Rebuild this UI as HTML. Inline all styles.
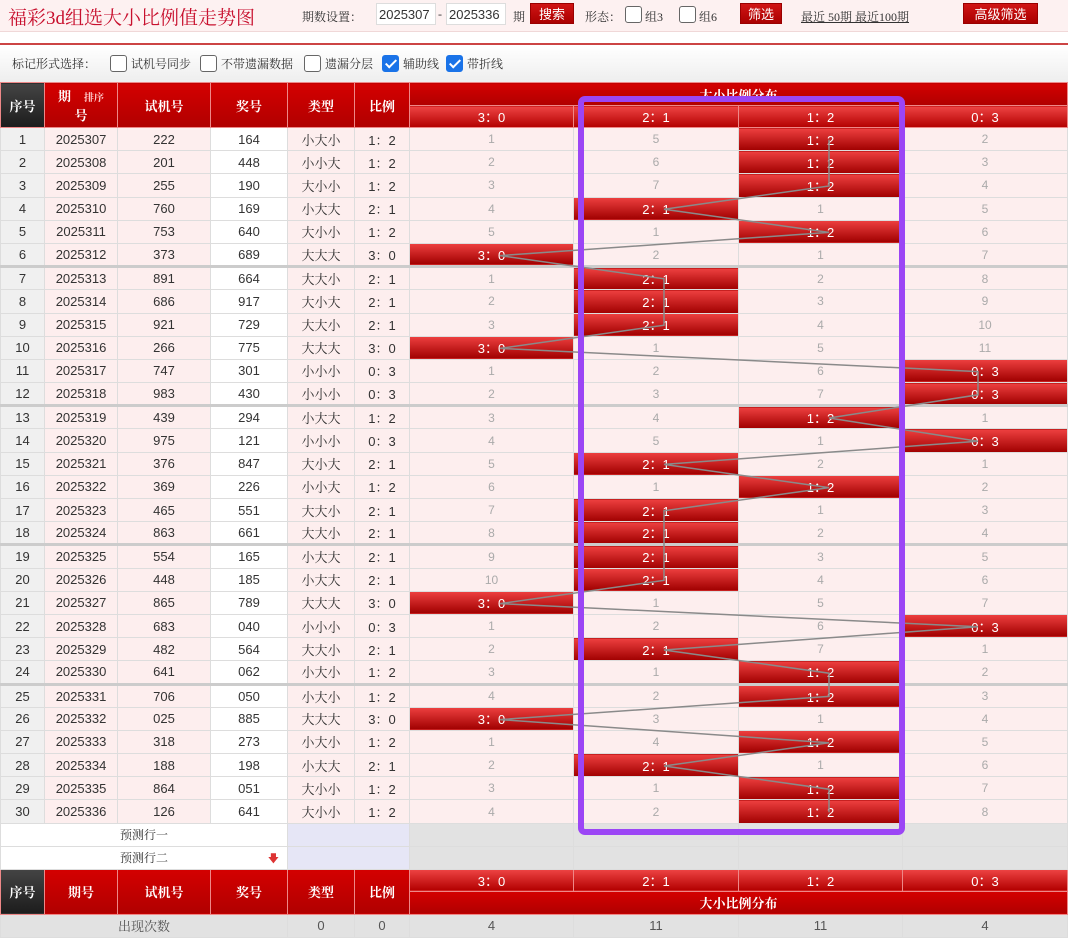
<!DOCTYPE html>
<html><head><meta charset="utf-8"><style>
*{margin:0;padding:0;box-sizing:border-box}
body{width:1078px;height:934px;overflow:hidden;background:#fff;font-family:"Liberation Sans","Noto Sans CJK SC",sans-serif;font-size:13px;color:#333;position:relative}
.top{position:absolute;left:0;top:0;width:1068px;height:32px;background:#fdf1f1;border-bottom:1px solid #f0d8d8}
.title{position:absolute;left:8px;top:3px;font-family:"Liberation Serif","Noto Serif CJK SC",serif;font-size:19px;color:#c8102e}
.s{font-family:"Liberation Serif","Noto Serif CJK SC",serif;font-size:12px;color:#333;position:absolute;top:8px}
.inp{position:absolute;top:3px;height:22px;width:60px;background:#fff;border:1px solid #ddd;font-size:13px;padding:3px 2px}
.btn{position:absolute;top:3px;height:21px;background:linear-gradient(#d01515,#a00);color:#fff;font-size:13px;text-align:center;line-height:21px;border:1px solid #900}
.cb{position:absolute;width:17px;height:17px;border:1px solid #666;border-radius:3px;background:#fff}
.cbc{background:#1a73e8;border-color:#1a73e8}
.cbc:after{content:"";position:absolute;left:5px;top:1px;width:4px;height:9px;border:solid #fff;border-width:0 2px 2px 0;transform:rotate(45deg)}
.redline{position:absolute;left:0;top:43px;width:1068px;height:2px;background:#c44}
.bar{position:absolute;left:0;top:46px;width:1068px;height:36px;background:linear-gradient(#fff,#eee);}
table{position:absolute;left:0;top:82px;border-collapse:collapse;table-layout:fixed;width:1067px}
td{text-align:center;border:1px solid #ddd;height:23.2px;padding:0;white-space:nowrap;overflow:hidden}
.h td{background:linear-gradient(#d40000,#b00000);color:#fff;font-family:"Liberation Serif","Noto Serif CJK SC",serif;font-weight:bold;font-size:13px;border-color:#e88}
.h td.dk{background:linear-gradient(#444,#1c1c1c)}
.h td.sub{background:linear-gradient(#ee4444,#b30000);font-weight:normal;font-family:"Liberation Sans","Noto Sans CJK SC",sans-serif;height:22px}
.h td.big{height:23px}
tbody.d td:nth-child(1){background:#f0f0f0}
tbody.d td:nth-child(2),tbody.d td:nth-child(3){background:#fdeeee}
tbody.d td:nth-child(4){background:#fff}
tbody.d td:nth-child(5),tbody.d td:nth-child(6){background:#fdeeee;font-family:"Liberation Sans","Noto Serif CJK SC",serif}
tbody.d td:nth-child(n+7){background:#fdeeee;color:#aaa;font-size:12px}
tbody.d td.r{background:linear-gradient(#ee4040,#a00000);color:#fff;font-size:13px}
tr.g td{border-top:3px solid #ccc}
.p td{background:#fff;font-family:"Liberation Serif","Noto Serif CJK SC",serif;font-size:12px;height:23px}
.p td.l{background:#e6e6f6}
.p td.gy{background:#e2e2e2}
.f td{background:#e2e2e2;color:#555}
svg{position:absolute;left:0;top:0}
</style></head><body>
<div class="top">
<div class="title">福彩3d组选大小比例值走势图</div>
<div class="s" style="left:302px">期数设置：</div>
<div class="inp" style="left:376px">2025307</div>
<div class="s" style="left:438px;top:7px">-</div>
<div class="inp" style="left:446px">2025336</div>
<div class="s" style="left:513px">期</div>
<div class="btn" style="left:530px;width:44px">搜索</div>
<div class="s" style="left:585px">形态：</div>
<div class="cb" style="left:625px;top:6px"></div><div class="s" style="left:645px">组3</div>
<div class="cb" style="left:679px;top:6px"></div><div class="s" style="left:699px">组6</div>
<div class="btn" style="left:740px;width:42px">筛选</div>
<div class="s" style="left:801px;text-decoration:underline">最近 50期 最近100期</div>
<div class="btn" style="left:963px;width:75px">高级筛选</div>
</div>
<div class="redline"></div>
<div class="bar">
<div class="s" style="left:12px;top:9px">标记形式选择：</div>
<div class="cb" style="left:110px;top:9px"></div><div class="s" style="left:131px;top:9px">试机号同步</div>
<div class="cb" style="left:200px;top:9px"></div><div class="s" style="left:221px;top:9px">不带遗漏数据</div>
<div class="cb" style="left:304px;top:9px"></div><div class="s" style="left:325px;top:9px">遗漏分层</div>
<div class="cb cbc" style="left:382px;top:9px"></div><div class="s" style="left:403px;top:9px">辅助线</div>
<div class="cb cbc" style="left:446px;top:9px"></div><div class="s" style="left:467px;top:9px">带折线</div>
</div>
<table>
<colgroup><col style="width:44px"><col style="width:73px"><col style="width:93px"><col style="width:77px"><col style="width:67px"><col style="width:55px"><col style="width:164px"><col style="width:165px"><col style="width:164px"><col style="width:165px"></colgroup>
<tbody class="h">
<tr><td rowspan="2" class="dk">序号</td><td rowspan="2">期　<span style="color:#fcc;font-size:10px">排序</span><br>号</td><td rowspan="2">试机号</td><td rowspan="2">奖号</td><td rowspan="2">类型</td><td rowspan="2">比例</td><td colspan="4" class="big">大小比例分布</td></tr>
<tr><td class="sub">3：0</td><td class="sub">2：1</td><td class="sub">1：2</td><td class="sub">0：3</td></tr>
</tbody>
<tbody class="d">
<tr><td>1</td><td>2025307</td><td>222</td><td>164</td><td>小大小</td><td>1：2</td><td>1</td><td>5</td><td class="r">1：2</td><td>2</td></tr>
<tr><td>2</td><td>2025308</td><td>201</td><td>448</td><td>小小大</td><td>1：2</td><td>2</td><td>6</td><td class="r">1：2</td><td>3</td></tr>
<tr><td>3</td><td>2025309</td><td>255</td><td>190</td><td>大小小</td><td>1：2</td><td>3</td><td>7</td><td class="r">1：2</td><td>4</td></tr>
<tr><td>4</td><td>2025310</td><td>760</td><td>169</td><td>小大大</td><td>2：1</td><td>4</td><td class="r">2：1</td><td>1</td><td>5</td></tr>
<tr><td>5</td><td>2025311</td><td>753</td><td>640</td><td>大小小</td><td>1：2</td><td>5</td><td>1</td><td class="r">1：2</td><td>6</td></tr>
<tr><td>6</td><td>2025312</td><td>373</td><td>689</td><td>大大大</td><td>3：0</td><td class="r">3：0</td><td>2</td><td>1</td><td>7</td></tr>
<tr class="g"><td>7</td><td>2025313</td><td>891</td><td>664</td><td>大大小</td><td>2：1</td><td>1</td><td class="r">2：1</td><td>2</td><td>8</td></tr>
<tr><td>8</td><td>2025314</td><td>686</td><td>917</td><td>大小大</td><td>2：1</td><td>2</td><td class="r">2：1</td><td>3</td><td>9</td></tr>
<tr><td>9</td><td>2025315</td><td>921</td><td>729</td><td>大大小</td><td>2：1</td><td>3</td><td class="r">2：1</td><td>4</td><td>10</td></tr>
<tr><td>10</td><td>2025316</td><td>266</td><td>775</td><td>大大大</td><td>3：0</td><td class="r">3：0</td><td>1</td><td>5</td><td>11</td></tr>
<tr><td>11</td><td>2025317</td><td>747</td><td>301</td><td>小小小</td><td>0：3</td><td>1</td><td>2</td><td>6</td><td class="r">0：3</td></tr>
<tr><td>12</td><td>2025318</td><td>983</td><td>430</td><td>小小小</td><td>0：3</td><td>2</td><td>3</td><td>7</td><td class="r">0：3</td></tr>
<tr class="g"><td>13</td><td>2025319</td><td>439</td><td>294</td><td>小大大</td><td>1：2</td><td>3</td><td>4</td><td class="r">1：2</td><td>1</td></tr>
<tr><td>14</td><td>2025320</td><td>975</td><td>121</td><td>小小小</td><td>0：3</td><td>4</td><td>5</td><td>1</td><td class="r">0：3</td></tr>
<tr><td>15</td><td>2025321</td><td>376</td><td>847</td><td>大小大</td><td>2：1</td><td>5</td><td class="r">2：1</td><td>2</td><td>1</td></tr>
<tr><td>16</td><td>2025322</td><td>369</td><td>226</td><td>小小大</td><td>1：2</td><td>6</td><td>1</td><td class="r">1：2</td><td>2</td></tr>
<tr><td>17</td><td>2025323</td><td>465</td><td>551</td><td>大大小</td><td>2：1</td><td>7</td><td class="r">2：1</td><td>1</td><td>3</td></tr>
<tr><td>18</td><td>2025324</td><td>863</td><td>661</td><td>大大小</td><td>2：1</td><td>8</td><td class="r">2：1</td><td>2</td><td>4</td></tr>
<tr class="g"><td>19</td><td>2025325</td><td>554</td><td>165</td><td>小大大</td><td>2：1</td><td>9</td><td class="r">2：1</td><td>3</td><td>5</td></tr>
<tr><td>20</td><td>2025326</td><td>448</td><td>185</td><td>小大大</td><td>2：1</td><td>10</td><td class="r">2：1</td><td>4</td><td>6</td></tr>
<tr><td>21</td><td>2025327</td><td>865</td><td>789</td><td>大大大</td><td>3：0</td><td class="r">3：0</td><td>1</td><td>5</td><td>7</td></tr>
<tr><td>22</td><td>2025328</td><td>683</td><td>040</td><td>小小小</td><td>0：3</td><td>1</td><td>2</td><td>6</td><td class="r">0：3</td></tr>
<tr><td>23</td><td>2025329</td><td>482</td><td>564</td><td>大大小</td><td>2：1</td><td>2</td><td class="r">2：1</td><td>7</td><td>1</td></tr>
<tr><td>24</td><td>2025330</td><td>641</td><td>062</td><td>小大小</td><td>1：2</td><td>3</td><td>1</td><td class="r">1：2</td><td>2</td></tr>
<tr class="g"><td>25</td><td>2025331</td><td>706</td><td>050</td><td>小大小</td><td>1：2</td><td>4</td><td>2</td><td class="r">1：2</td><td>3</td></tr>
<tr><td>26</td><td>2025332</td><td>025</td><td>885</td><td>大大大</td><td>3：0</td><td class="r">3：0</td><td>3</td><td>1</td><td>4</td></tr>
<tr><td>27</td><td>2025333</td><td>318</td><td>273</td><td>小大小</td><td>1：2</td><td>1</td><td>4</td><td class="r">1：2</td><td>5</td></tr>
<tr><td>28</td><td>2025334</td><td>188</td><td>198</td><td>小大大</td><td>2：1</td><td>2</td><td class="r">2：1</td><td>1</td><td>6</td></tr>
<tr><td>29</td><td>2025335</td><td>864</td><td>051</td><td>大小小</td><td>1：2</td><td>3</td><td>1</td><td class="r">1：2</td><td>7</td></tr>
<tr><td>30</td><td>2025336</td><td>126</td><td>641</td><td>大小小</td><td>1：2</td><td>4</td><td>2</td><td class="r">1：2</td><td>8</td></tr>
</tbody>
<tbody class="p">
<tr><td colspan="4">预测行一</td><td colspan="2" class="l"></td><td class="gy"></td><td class="gy"></td><td class="gy"></td><td class="gy"></td></tr>
<tr><td colspan="4" style="position:relative">预测行二<span style="position:absolute;right:8px;top:3px;color:#d33;font-size:11px">&#x1F847;</span></td><td colspan="2" class="l"></td><td class="gy"></td><td class="gy"></td><td class="gy"></td><td class="gy"></td></tr>
</tbody>
<tbody class="h">
<tr><td rowspan="2" class="dk">序号</td><td rowspan="2">期号</td><td rowspan="2">试机号</td><td rowspan="2">奖号</td><td rowspan="2">类型</td><td rowspan="2">比例</td><td class="sub">3：0</td><td class="sub">2：1</td><td class="sub">1：2</td><td class="sub">0：3</td></tr>
<tr><td colspan="4" class="big">大小比例分布</td></tr>
</tbody>
<tbody class="f">
<tr><td colspan="4" style="font-family:'Liberation Serif','Noto Serif CJK SC',serif">出现次数</td><td>0</td><td>0</td><td>4</td><td>11</td><td>11</td><td>4</td></tr>
</tbody>
</table>
<svg width="1078" height="934">
<polyline fill="none" stroke="#8a8a8a" stroke-width="1.5" points="829,139.6 829,162.8 829,186 664,209.2 829,232.4 500,255.6 664,278.8 664,302 664,325.2 500,348.4 978,371.6 978,394.8 829,418 978,441.2 664,464.4 829,487.6 664,510.8 664,534 664,557.2 664,580.4 500,603.6 978,626.8 664,650 829,673.2 829,696.4 500,719.6 829,742.8 664,766 829,789.2 829,812.4"/>
<rect x="581" y="99" width="321" height="733" rx="4" fill="none" stroke="#9b45f5" stroke-width="6"/>
</svg>
</body></html>
